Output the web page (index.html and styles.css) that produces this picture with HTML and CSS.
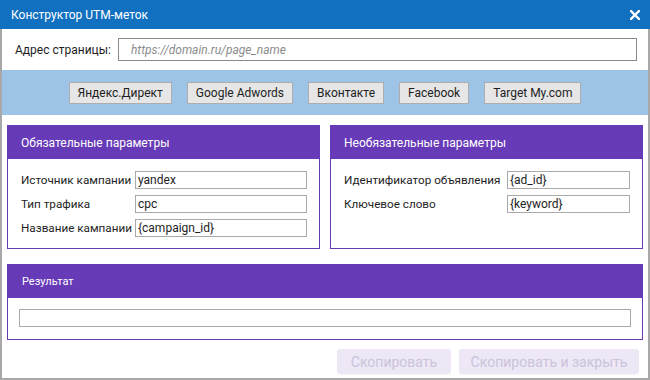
FILE: index.html
```html
<!DOCTYPE html>
<html lang="ru">
<head>
    <meta charset="UTF-8">
    <title>Конструктор UTM-меток</title>
    <link rel="stylesheet" href="styles.css">
</head>
<body>
    <div class="window">
        <div class="titlebar">
            <span class="title">Конструктор UTM-меток</span>
            <svg class="close" width="10" height="10" viewBox="0 0 10 10">
                <path d="M1 1L9 9M9 1L1 9" stroke="#fff" stroke-width="2.4" stroke-linecap="square"/>
            </svg>
        </div>
        <div class="content">
            <div class="address-row">
                <label for="page-url">Адрес страницы:</label>
                <input type="text" id="page-url" placeholder="https://domain.ru/page_name">
            </div>
            <div class="presets">
                <button>Яндекс.Директ</button>
                <button>Google Adwords</button>
                <button>Вконтакте</button>
                <button>Facebook</button>
                <button>Target My.com</button>
            </div>
            <div class="panels">
                <div class="panel panel-required">
                    <div class="panel-header">Обязательные параметры</div>
                    <div class="panel-body">
                        <div class="field">
                            <label>Источник кампании</label>
                            <input type="text" value="yandex">
                        </div>
                        <div class="field">
                            <label>Тип трафика</label>
                            <input type="text" value="cpc">
                        </div>
                        <div class="field">
                            <label>Название кампании</label>
                            <input type="text" value="{campaign_id}">
                        </div>
                    </div>
                </div>
                <div class="panel panel-optional">
                    <div class="panel-header">Необязательные параметры</div>
                    <div class="panel-body">
                        <div class="field">
                            <label>Идентификатор объявления</label>
                            <input type="text" value="{ad_id}">
                        </div>
                        <div class="field">
                            <label>Ключевое слово</label>
                            <input type="text" value="{keyword}">
                        </div>
                    </div>
                </div>
            </div>
            <div class="panel panel-result">
                <div class="panel-header result-header">Результат</div>
                <div class="panel-body">
                    <input type="text" id="result">
                </div>
            </div>
            <div class="actions">
                <button disabled>Скопировать</button>
                <button disabled>Скопировать и закрыть</button>
            </div>
        </div>
    </div>
</body>
</html>
```

FILE: styles.css
```css
body {
    margin: 0;
    font-family: Roboto, "Noto Sans", sans-serif;
    font-size: 12px;
    color: #1e1e1e;
    background: #fff;
}
.window {
    width: 650px;
    height: 380px;
    display: flex;
    flex-direction: column;
}
.titlebar {
    height: 29px;
    flex: none;
    background-color: #1170c0;
    color: #fff;
    display: flex;
    align-items: center;
    justify-content: space-between;
    padding: 0 10px 0 11px;
    font-size: 12px;
}
.titlebar .close {
    margin-top: 1px;
}
.content {
    flex: 1;
    border: 2px solid #a8a8a8;
    border-top: none;
    display: flex;
    flex-direction: column;
}
.address-row {
    display: flex;
    align-items: center;
    padding: 9px 11px 0 13px;
    font-size: 12px;
}
.address-row label {
    margin-right: 7px;
    white-space: nowrap;
}
.address-row input {
    flex: 1;
    height: 23px;
    box-sizing: border-box;
    border: 1px solid #8a8a8a;
    padding: 0 12px;
    font-family: inherit;
    font-size: 12px;
}
.address-row input::placeholder {
    color: #8c8c8c;
    font-style: italic;
}
.presets {
    margin-top: 9px;
    height: 45px;
    background-color: #9dc3e6;
    display: flex;
    align-items: center;
    justify-content: center;
    gap: 15px;
}
.presets button {
    height: 22px;
    padding: 0 8px;
    border: 1px solid #adadad;
    background-color: #e6e6e6;
    font-family: inherit;
    font-size: 12px;
    color: #1e1e1e;
}
.panels {
    display: grid;
    grid-template-columns: minmax(0, 1fr) minmax(0, 1fr);
    gap: 10px;
    margin: 10px 5px 0;
    height: 124px;
}
.panel {
    border: 1px solid #673ab7;
    display: flex;
    flex-direction: column;
    min-width: 0;
}
.panel-header {
    height: 33px;
    flex: none;
    background-color: #673ab7;
    color: #fff;
    font-size: 12px;
    display: flex;
    align-items: center;
    padding-left: 13px;
}
.panel-body {
    padding: 12px 12px 0 13px;
}
.field {
    display: flex;
    align-items: center;
    margin-bottom: 6px;
    font-size: 11.7px;
}
.field label {
    flex: none;
    white-space: nowrap;
}
.panel-required .field label {
    width: 114px;
}
.panel-optional .field label {
    width: 163px;
}
.field input,
#result {
    flex: 1;
    min-width: 0;
    height: 18px;
    box-sizing: border-box;
    border: 1px solid #a9a9a9;
    padding: 0 2px;
    font-family: inherit;
    font-size: 12px;
    color: #1e1e1e;
}
.panel-result {
    margin: 15px 5px 0;
    height: 76px;
    box-sizing: border-box;
}
.panel-result .panel-body {
    padding: 11px 11px 0 11px;
    display: flex;
}
.result-header {
    font-size: 11px;
    padding-left: 14px;
}
.actions {
    display: flex;
    justify-content: flex-end;
    gap: 8px;
    margin: 9px 9px 0 0;
}
.actions button {
    height: 25px;
    padding: 0 8px;
    border: none;
    border-radius: 3px;
    background-color: #ede7f6;
    color: #cbc3da;
    font-family: inherit;
    font-size: 14px;
    box-shadow: 0 1px 1px rgba(0, 0, 0, 0.04);
}
.actions button:first-child {
    width: 114px;
}
.actions button:last-child {
    width: 180px;
}
```
